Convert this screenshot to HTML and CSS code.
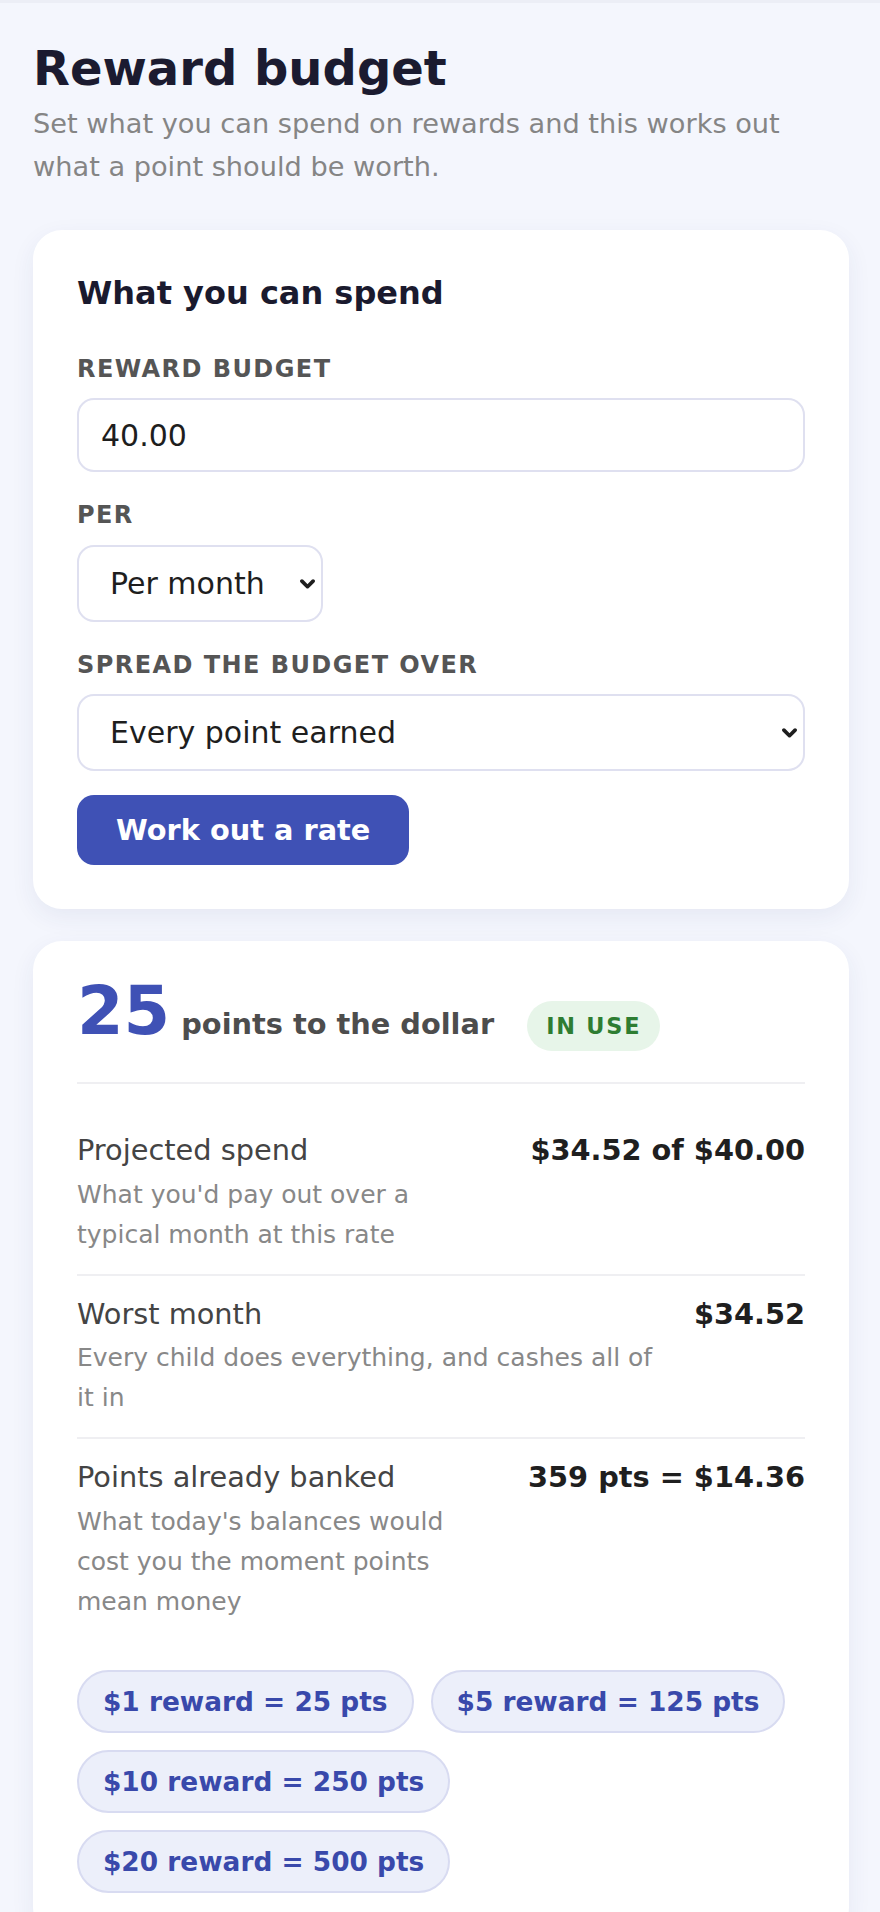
FILE: index.html
```html
<!DOCTYPE html>
<html lang="en">
<head>
<meta charset="utf-8">
<title>Reward budget</title>
<link rel="stylesheet" href="styles.css">
</head>
<body>
<main class="page">
  <h1 class="page-title">Reward budget</h1>
  <p class="page-sub">Set what you can spend on rewards and this works out what a point should be worth.</p>

  <section class="card form-card">
    <h2 class="card-title">What you can spend</h2>

    <div class="field">
      <label class="field-label" for="budget">Reward budget</label>
      <input class="text-input" id="budget" type="text" value="40.00">
    </div>

    <div class="field">
      <label class="field-label" for="per">Per</label>
      <div class="select-wrap select-short">
        <select class="select" id="per">
          <option>Per month</option>
          <option>Per week</option>
        </select>
        <svg class="chevron" viewBox="0 0 14 9" aria-hidden="true"><path d="M1.8 1.8 L7 7 L12.2 1.8" /></svg>
      </div>
    </div>

    <div class="field">
      <label class="field-label" for="spread">Spread the budget over</label>
      <div class="select-wrap">
        <select class="select" id="spread">
          <option>Every point earned</option>
          <option>Points cashed in</option>
        </select>
        <svg class="chevron" viewBox="0 0 14 9" aria-hidden="true"><path d="M1.8 1.8 L7 7 L12.2 1.8" /></svg>
      </div>
    </div>

    <button class="primary-btn" type="button">Work out a rate</button>
  </section>

  <section class="card result-card">
    <div class="rate-head">
      <span class="rate-num">25</span>
      <span class="rate-text">points to the dollar</span>
      <span class="badge">IN USE</span>
    </div>

    <div class="stat-row">
      <div class="stat-main">
        <div class="stat-label">Projected spend</div>
        <div class="stat-note">What you'd pay out over a typical month at this rate</div>
      </div>
      <div class="stat-value">$34.52 of $40.00</div>
    </div>

    <div class="stat-row">
      <div class="stat-main">
        <div class="stat-label">Worst month</div>
        <div class="stat-note">Every child does everything, and cashes all of it in</div>
      </div>
      <div class="stat-value">$34.52</div>
    </div>

    <div class="stat-row last">
      <div class="stat-main">
        <div class="stat-label">Points already banked</div>
        <div class="stat-note">What today's balances would cost you the moment points mean money</div>
      </div>
      <div class="stat-value">359 pts = $14.36</div>
    </div>

    <div class="chips">
      <span class="chip">$1 reward = 25 pts</span>
      <span class="chip">$5 reward = 125 pts</span>
      <span class="chip">$10 reward = 250 pts</span>
      <span class="chip">$20 reward = 500 pts</span>
    </div>
  </section>
</main>
</body>
</html>
```

FILE: styles.css
```css
* { box-sizing: border-box; }

html, body {
  margin: 0;
  padding: 0;
}

body {
  background: #f4f6fd;
  font-family: "DejaVu Sans", Verdana, sans-serif;
  color: #222;
  border-top: 3px solid #eceef6;
}

.page {
  padding: 37px 31px 60px 33px;
}

.page-title {
  margin: 0 0 4px;
  font-size: 48px;
  line-height: 57.6px;
  font-weight: 700;
  color: #1b1b30;
}

.page-sub {
  margin: 0 0 42px;
  font-size: 27.2px;
  line-height: 43.2px;
  color: #858585;
}

.card {
  background: #ffffff;
  border-radius: 29px;
  padding: 44px;
  box-shadow: 0 8px 24px rgba(40, 50, 120, 0.07);
}

.form-card {
  margin-bottom: 32px;
}

.card-title {
  margin: 0;
  font-size: 32px;
  line-height: 38.4px;
  font-weight: 700;
  color: #1a1a2e;
}

.field {
  display: flex;
  flex-direction: column;
  margin-top: 29px;
}

.card-title + .field {
  margin-top: 42.5px;
}

.field-label {
  font-size: 24px;
  line-height: 28.8px;
  font-weight: 700;
  letter-spacing: 0.06em;
  text-transform: uppercase;
  color: #555555;
  margin-bottom: 14.5px;
}

.text-input {
  width: 100%;
  height: 74px;
  padding: 0 22px;
  font-family: inherit;
  font-size: 30px;
  color: #1e1e1e;
  background: #fff;
  border: 2px solid #dfe0f0;
  border-radius: 17px;
  outline: none;
}

.select-wrap {
  position: relative;
  width: 100%;
}

.select-short {
  width: 246px;
}

.select {
  -webkit-appearance: none;
  appearance: none;
  width: 100%;
  height: 77px;
  padding: 0 50px 0 31px;
  font-family: inherit;
  font-size: 30px;
  color: #1e1e1e;
  background: #fff;
  border: 2px solid #dfe0f0;
  border-radius: 17px;
  outline: none;
}

.chevron {
  position: absolute;
  right: 8px;
  top: 50%;
  width: 15px;
  height: 10px;
  margin-top: -4px;
  pointer-events: none;
}

.chevron path {
  fill: none;
  stroke: #1e1e1e;
  stroke-width: 3.4;
  stroke-linecap: round;
  stroke-linejoin: round;
}

.primary-btn {
  margin-top: 24px;
  height: 70px;
  padding: 0 39px;
  font-family: inherit;
  font-size: 28.8px;
  font-weight: 700;
  color: #ffffff;
  background: #3f51b5;
  border: none;
  border-radius: 17px;
}

.rate-head {
  display: flex;
  align-items: baseline;
  padding-bottom: 31px;
  border-bottom: 2px solid #efeff2;
  margin-bottom: 28px;
}

.rate-num {
  font-size: 67px;
  line-height: 52.8px;
  font-weight: 700;
  color: #3f51b5;
  margin-right: 11px;
}

.rate-text {
  font-size: 28.8px;
  line-height: 34.8px;
  font-weight: 700;
  color: #4d4d4d;
}

.badge {
  display: inline-flex;
  align-items: center;
  height: 50px;
  margin-left: 33px;
  padding: 0 19px 0 19px;
  border-radius: 25px;
  background: #e7f5e9;
  color: #2e7d32;
  font-size: 22.4px;
  font-weight: 700;
  letter-spacing: 0.08em;
}

.stat-row {
  display: flex;
  align-items: flex-start;
  justify-content: space-between;
  gap: 32px;
  padding: 18px 0 19px;
  border-bottom: 2px solid #efeff2;
}

.stat-row.last {
  border-bottom: none;
}

.stat-main {
  flex: 1 1 auto;
  min-width: 0;
}

.stat-label {
  font-size: 28.8px;
  line-height: 40.3px;
  color: #444444;
}

.stat-note {
  margin-top: 4.5px;
  font-size: 25px;
  line-height: 40px;
  color: #888888;
}

.stat-value {
  flex: 0 0 auto;
  font-size: 28.8px;
  line-height: 40.3px;
  font-weight: 700;
  color: #1f1f1f;
  text-align: right;
}

.chips {
  display: flex;
  flex-wrap: wrap;
  gap: 17px;
  margin-top: 29px;
}

.chip {
  display: inline-block;
  padding: 14px 24px;
  line-height: 31px;
  font-size: 26.4px;
  font-weight: 700;
  color: #3949ab;
  background: #eceffa;
  border: 2px solid #d8dbf1;
  border-radius: 32px;
}
```
